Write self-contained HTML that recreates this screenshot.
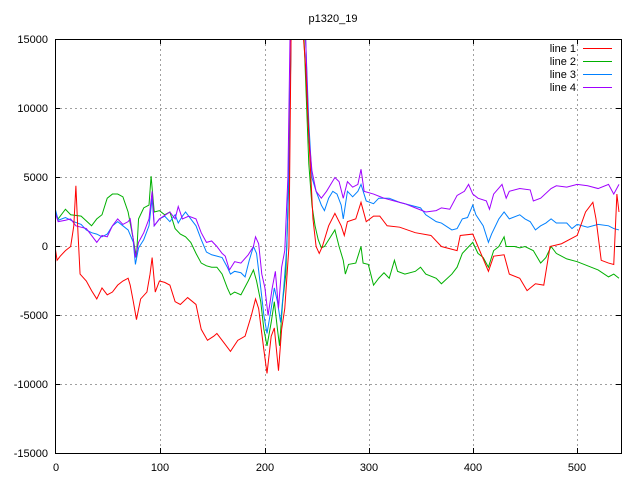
<!DOCTYPE html>
<html><head><style>
html,body{margin:0;padding:0;background:#fff;}
svg text{font-family:"Liberation Sans","DejaVu Sans",sans-serif;font-size:11px;fill:#000;}
</style></head><body>
<svg width="640" height="480" xmlns="http://www.w3.org/2000/svg">
<defs><clipPath id="c"><rect x="55" y="39" width="566" height="414"/></clipPath></defs>
<rect width="640" height="480" fill="#fff"/>
<g stroke="#a0a0a0" stroke-dasharray="2,3" stroke-width="1">
<line x1="160.5" y1="39" x2="160.5" y2="453"/><line x1="265.5" y1="39" x2="265.5" y2="453"/>
<line x1="369.5" y1="39" x2="369.5" y2="453"/><line x1="473.5" y1="39" x2="473.5" y2="453"/>
<line x1="577.5" y1="39" x2="577.5" y2="453"/>
<line x1="55" y1="108.5" x2="621" y2="108.5"/><line x1="55" y1="177.5" x2="621" y2="177.5"/>
<line x1="55" y1="246.5" x2="621" y2="246.5"/><line x1="55" y1="315.5" x2="621" y2="315.5"/>
<line x1="55" y1="384.5" x2="621" y2="384.5"/>
</g>
<g clip-path="url(#c)" fill="none" stroke-width="1">
<g transform="translate(55,246.5) scale(1.0444,-0.0138)">
<polyline vector-effect="non-scaling-stroke" stroke="#00b000" points="0,2500 3,2000 10,2700 15,2300 25,2200 35,1500 40,2000 45,2300 50,3500 55,3800 60,3800 65,3600 70,2500 75,500 78,-800 80,2000 85,2800 90,3000 92,5100 95,2500 100,2600 105,2300 110,2500 115,1300 120,900 125,700 130,300 135,-500 140,-1200 145,-1400 150,-1500 155,-1500 160,-2000 165,-3000 168,-3500 172,-3300 178,-3500 185,-2500 190,-1700 193,-2500 197,-4000 200,-6000 203,-7200 207,-5500 210,-4000 213,-6000 215,-7200 218,-4000 221,-2000 224,5000 226,15000 238,16000 240,12000 243,6000 246,3000 249,1500 252,500 255,-100 258,0 263,600 268,1200 272,0 276,-1000 278,-2000 281,-1300 288,-1200 293,0 295,-1200 300,-1300 305,-2800 310,-2300 315,-1900 320,-2300 325,-1000 328,-1800 335,-2000 345,-1800 350,-1500 355,-2000 365,-2300 370,-2700 380,-2000 385,-1500 390,-500 395,-100 400,300 405,-500 410,-800 415,-1500 420,-300 425,0 430,700 432,0 440,0 445,-100 450,0 458,-300 465,-1200 470,-800 475,0 480,-500 490,-900 500,-1100 510,-1400 520,-1700 530,-2200 535,-2000 540,-2300"/>
<polyline vector-effect="non-scaling-stroke" stroke="#0080ff" points="0,2800 3,1900 10,2100 18,1800 25,1600 30,1200 35,1000 40,900 45,700 50,900 55,1500 60,1800 65,1500 70,1200 75,300 77,-1300 80,-100 85,500 90,1500 93,3500 95,1500 100,2000 105,2200 110,1800 115,2300 118,1700 122,2200 125,2500 130,2000 135,1500 140,500 145,-400 150,-600 155,-700 160,-800 165,-1500 168,-2000 172,-1800 178,-1900 182,-2200 186,-1000 190,0 193,-500 197,-3000 200,-5000 203,-6300 207,-4500 210,-3000 213,-4000 216,-5500 219,-3000 222,0 224,6000 226,15000 240,15000 243,9000 246,5000 250,4000 255,3000 258,2600 262,3500 266,4000 270,3800 274,3000 276,2000 280,4000 285,3600 290,4000 293,4500 298,3300 305,3100 310,3500 320,3500 330,3200 340,3000 350,2800 355,2300 365,1800 370,1700 380,1200 385,1300 390,2000 395,2100 400,3000 403,2300 410,1500 415,300 418,900 425,2000 430,2500 435,2000 445,2300 450,2000 455,1800 460,1200 465,1500 470,1700 475,2000 480,1700 490,1700 495,1300 500,1600 510,1400 520,1600 530,1500 535,1300 540,1200"/>
<polyline vector-effect="non-scaling-stroke" stroke="#a000ff" points="0,2500 3,1800 10,1900 15,2000 20,1500 25,1400 30,1300 35,800 40,300 42,500 45,800 50,700 55,1500 60,2000 65,1600 70,1800 72,2000 75,500 77,-800 80,300 85,1000 90,2000 93,4000 95,1500 100,2000 110,2500 115,2000 118,2900 122,2000 128,2200 135,2000 140,1000 145,300 150,400 155,0 160,-500 163,-700 167,-1700 172,-1100 178,-1200 185,-600 190,0 192,700 195,200 198,-2000 201,-3000 204,-5000 208,-3000 211,-1800 214,-4500 217,-1500 220,-300 223,5000 225,15000 240,15000 243,8000 246,5500 250,4000 255,3500 260,4000 264,4500 268,5000 272,4700 276,3500 280,4700 285,4300 290,4500 293,5600 296,4000 305,3800 315,3500 325,3300 335,3100 345,2800 355,2500 365,2600 370,2800 378,2700 385,3700 392,4000 396,4500 400,3800 405,3500 413,3300 416,2700 420,3800 428,4500 432,3500 435,4000 445,4200 455,4100 458,3300 465,3500 475,4200 480,4400 490,4300 500,4500 510,4400 520,4200 530,4500 535,3800 540,4500"/>
<polyline vector-effect="non-scaling-stroke" stroke="#ff0000" points="0,0 2,-1000 5,-700 10,-300 15,0 18,1500 20,4400 22,1000 24,-2000 30,-2500 35,-3200 40,-3800 45,-3000 50,-3500 55,-3300 60,-2800 65,-2500 70,-2300 72,-2800 75,-4000 78,-5300 82,-3800 88,-3300 91,-2000 93,-800 96,-3300 100,-2500 105,-2600 110,-2800 115,-4000 120,-4200 127,-3700 135,-4200 140,-6000 146,-6800 152,-6500 155,-6300 162,-7000 168,-7600 175,-6800 182,-6500 188,-5000 192,-3800 195,-4500 200,-7500 203,-9200 207,-6500 210,-5900 214,-9000 217,-6000 220,-4500 224,0 226,15000 238,15000 240,13000 243,8000 247,2000 250,0 253,-500 256,0 262,1500 268,2400 274,1500 277,800 280,1800 288,2000 293,3200 298,1800 305,2200 311,2200 318,1500 330,1400 345,1000 360,800 370,0 385,-300 388,800 400,900 405,0 415,-1800 420,-700 430,-600 435,-2000 445,-2300 452,-3200 460,-2700 468,-2800 474,0 485,200 500,800 508,2500 515,3200 518,2000 523,-1000 530,-1200 535,-1300 538,3800 540,2500"/>
</g></g>
<rect x="55.5" y="39.5" width="566" height="414" fill="none" stroke="#000"/>
<g stroke="#000">
<line x1="160.5" y1="453" x2="160.5" y2="448"/><line x1="265.5" y1="453" x2="265.5" y2="448"/><line x1="369.5" y1="453" x2="369.5" y2="448"/><line x1="473.5" y1="453" x2="473.5" y2="448"/><line x1="577.5" y1="453" x2="577.5" y2="448"/>
<line x1="160.5" y1="39" x2="160.5" y2="44"/><line x1="265.5" y1="39" x2="265.5" y2="44"/><line x1="369.5" y1="39" x2="369.5" y2="44"/><line x1="473.5" y1="39" x2="473.5" y2="44"/><line x1="577.5" y1="39" x2="577.5" y2="44"/>
<line x1="55" y1="108.5" x2="60" y2="108.5"/><line x1="55" y1="177.5" x2="60" y2="177.5"/><line x1="55" y1="246.5" x2="60" y2="246.5"/><line x1="55" y1="315.5" x2="60" y2="315.5"/><line x1="55" y1="384.5" x2="60" y2="384.5"/>
<line x1="621" y1="108.5" x2="616" y2="108.5"/><line x1="621" y1="177.5" x2="616" y2="177.5"/><line x1="621" y1="246.5" x2="616" y2="246.5"/><line x1="621" y1="315.5" x2="616" y2="315.5"/><line x1="621" y1="384.5" x2="616" y2="384.5"/>
</g>
<text x="333" y="22" text-anchor="middle">p1320_19</text>
<g text-anchor="end">
<text x="48" y="43">15000</text><text x="48" y="112">10000</text><text x="48" y="181">5000</text><text x="48" y="250">0</text>
<text x="48" y="319">-5000</text><text x="48" y="388">-10000</text><text x="48" y="457">-15000</text>
</g>
<g text-anchor="middle">
<text x="56" y="471">0</text><text x="160" y="471">100</text><text x="265" y="471">200</text><text x="369" y="471">300</text><text x="473" y="471">400</text><text x="577" y="471">500</text>
</g>
<g text-anchor="end">
<text x="576" y="52">line 1</text><text x="576" y="65">line 2</text><text x="576" y="78">line 3</text><text x="576" y="91">line 4</text>
</g>
<line x1="583" y1="48.5" x2="612" y2="48.5" stroke="#ff0000"/>
<line x1="583" y1="61.5" x2="612" y2="61.5" stroke="#00b000"/>
<line x1="583" y1="74.5" x2="612" y2="74.5" stroke="#0080ff"/>
<line x1="583" y1="87.5" x2="612" y2="87.5" stroke="#a000ff"/>
</svg>
</body></html>
